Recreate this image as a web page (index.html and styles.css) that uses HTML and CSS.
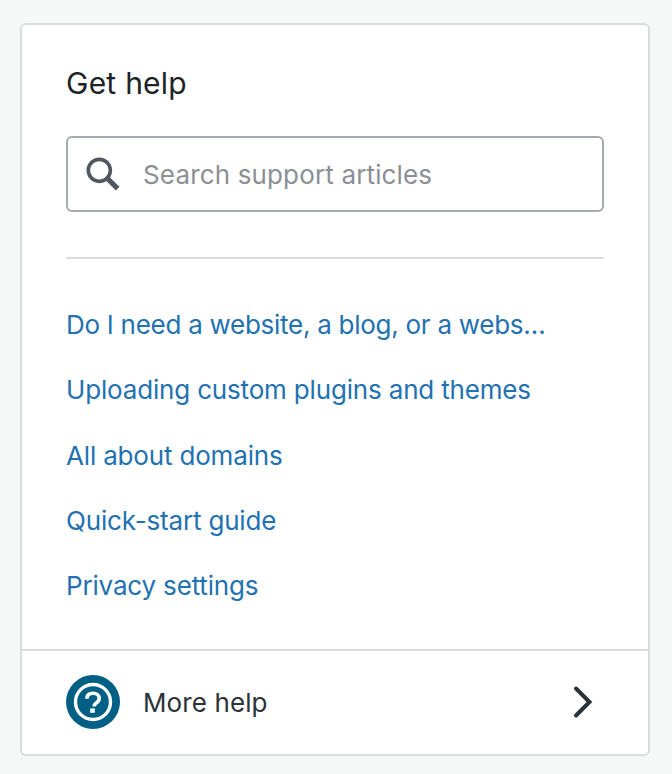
FILE: index.html
```html
<!DOCTYPE html>
<html lang="en">
<head>
<meta charset="utf-8">
<title>Get help</title>
<link rel="stylesheet" href="styles.css">
</head>
<body>
<section class="card">
  <div class="main">
    <h2 class="title">Get help</h2>
    <div class="search">
      <svg class="search-icon" viewBox="0 0 24 24" width="44" height="44" aria-hidden="true"><path d="M21 19l-5.154-5.154C16.574 12.742 17 11.42 17 10c0-3.866-3.134-7-7-7s-7 3.134-7 7 3.134 7 7 7c1.42 0 2.742-.426 3.846-1.154L19 21l2-2zM5 10c0-2.757 2.243-5 5-5s5 2.243 5 5-2.243 5-5 5-5-2.243-5-5z"/></svg>
      <span class="placeholder">Search support articles</span>
    </div>
    <ul class="links">
      <li class="truncated"><a href="#">Do I need a website, a blog, or a webs…</a></li>
      <li><a href="#">Uploading custom plugins and themes</a></li>
      <li><a href="#">All about domains</a></li>
      <li><a href="#">Quick-start guide</a></li>
      <li><a href="#">Privacy settings</a></li>
    </ul>
  </div>
  <a class="footer" href="#">
    <span class="badge">
      <svg viewBox="0 0 54 54" width="54" height="54" aria-hidden="true">
        <circle cx="27" cy="27" r="27" fill="#005f85"/>
        <circle cx="27" cy="27" r="17.5" fill="none" stroke="#fff" stroke-width="3.4"/>
        <path d="M20.9 23.8c0-3.9 2.7-5.6 6.2-5.6s6.1 2 6.1 5.2c0 2.5-1.4 3.5-3 4.6-1.4 1-2 1.7-2 3.4" fill="none" stroke="#fff" stroke-width="3.6"/>
        <rect x="24.2" y="33.4" width="4.6" height="4.4" fill="#fff"/>
      </svg>
    </span>
    <span class="footer-label">More help</span>
    <svg class="chevron" viewBox="0 0 24 34" width="24" height="34" aria-hidden="true"><path d="M6 3.5L19.5 17 6 30.5" fill="none" stroke="#2c3338" stroke-width="4" stroke-linecap="round" stroke-linejoin="miter"/></svg>
  </a>
</section>
</body>
</html>
```
FILE: styles.css
```css
* { box-sizing: border-box; }
html, body { margin: 0; height: 100%; }
body {
  background: #f6f7f7;
  padding: 23px 22px 18px 20px;
  font-family: Inter, "Liberation Sans", sans-serif;
  overflow: hidden;
}
.card {
  background: #fff;
  border: 2px solid #dcdcde;
  border-radius: 6px;
  height: 733px;
  display: flex;
  flex-direction: column;
}
.main {
  flex: 1;
  padding: 0 44px;
}
.title {
  margin: 40px 0 0;
  font-size: 30px;
  line-height: 36px;
  font-weight: 400;
  letter-spacing: 0.25px;
  color: #1d2327;
}
.search {
  margin-top: 35px;
  height: 76px;
  border: 2px solid #a7aaad;
  border-radius: 6px;
  display: flex;
  align-items: center;
  padding-left: 13px;
  gap: 18px;
}
.search-icon { fill: #50575e; flex: none; }
.placeholder {
  font-size: 26px;
  letter-spacing: 0.15px;
  color: #8c8f94;
}
.links {
  list-style: none;
  margin: 45px 0 0;
  padding: 33px 0 0;
  border-top: 2px solid #dcdcde;
}
.links li {
  height: 65.25px;
  line-height: 65px;
  font-size: 26px;
  letter-spacing: -0.17px;
  white-space: nowrap;
}
.links .truncated { letter-spacing: -0.27px; }
.links a {
  color: #2271b1;
  text-decoration: none;
}
.footer {
  height: 105px;
  border-top: 2px solid #dcdcde;
  display: flex;
  align-items: center;
  padding: 0 54px 1px 44px;
  color: #2c3338;
  text-decoration: none;
}
.badge { display: flex; flex: none; }
.footer-label {
  margin-left: 23px;
  flex: 1;
  font-size: 26px;
  letter-spacing: 0.1px;
}
.chevron { flex: none; }
```
